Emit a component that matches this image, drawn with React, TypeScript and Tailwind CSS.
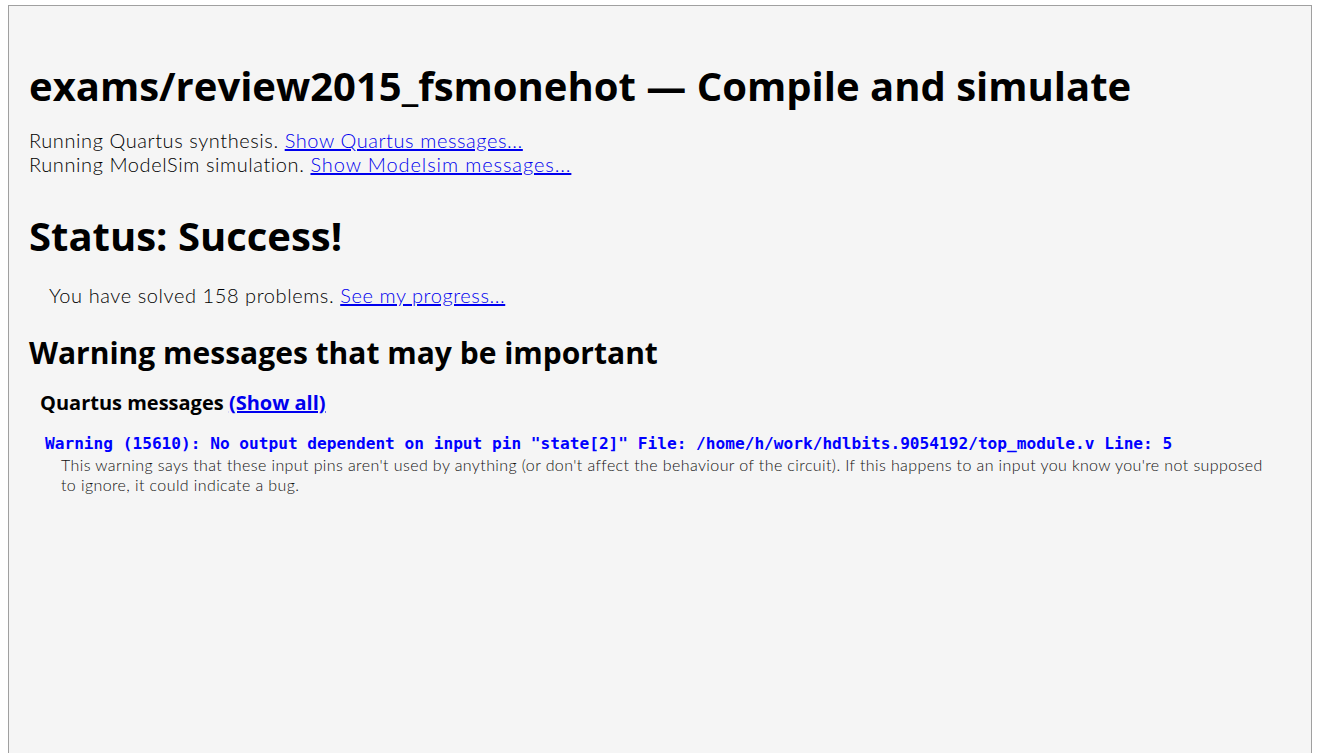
import React from "react";

export default function App() {
  return (
    <div className="h-[753px] overflow-hidden bg-white pt-[5px]">
      <div className="ml-[8px] w-[1304px] h-[760px] border border-[#a0a0a0] bg-[#f5f5f5] pl-[20px] pr-[20px] pt-[53px] text-black">
        <h1 className="font-['Open_Sans','Noto_Sans',sans-serif] text-[40px] leading-[54px] font-bold">
          exams/review2015_fsmonehot — Compile and simulate
        </h1>
        <div className="mt-[15px] font-['Lato','Open_Sans',sans-serif] text-[20px] leading-[24px] tracking-[0.58px] font-light">
          <div>
            Running Quartus synthesis.{" "}
            <a href="#" className="text-[#0000ee] underline">Show Quartus messages...</a>
          </div>
          <div>
            Running ModelSim simulation.{" "}
            <a href="#" className="text-[#0000ee] underline tracking-[0.9px]">Show Modelsim messages...</a>
          </div>
        </div>
        <h1 className="mt-[33px] font-['Open_Sans','Noto_Sans',sans-serif] text-[40px] leading-[54px] font-bold">
          Status: Success!
        </h1>
        <div className="mt-[20px] pl-[20px] font-['Lato','Open_Sans',sans-serif] text-[20px] leading-[24px] tracking-[0.58px] font-light">
          You have solved 158 problems.{" "}
          <a href="#" className="text-[#0000ee] underline">See my progress...</a>
        </div>
        <h2 className="mt-[25px] font-['Open_Sans','Noto_Sans',sans-serif] text-[30px] leading-[41px] font-bold">
          Warning messages that may be important
        </h2>
        <h3 className="mt-[16px] pl-[11px] font-['Open_Sans','Noto_Sans',sans-serif] text-[20px] leading-[27px] font-bold">
          Quartus messages{" "}
          <a href="#" className="text-[#0000ee] underline">(Show all)</a>
        </h3>
        <div className="mt-[18px] pl-[16px] font-['DejaVu_Sans_Mono','Liberation_Mono',monospace] text-[16.15px] leading-[20px] font-bold text-[#0000ff] whitespace-pre">
          Warning (15610): No output dependent on input pin "state[2]" File: /home/h/work/hdlbits.9054192/top_module.v Line: 5
        </div>
        <div className="mt-[1px] pl-[32px] font-['Lato','Open_Sans',sans-serif] text-[16px] leading-[20px] tracking-[0.4px] text-[#111] font-light">
          This warning says that these input pins aren't used by anything (or don't affect the behaviour of the circuit). If this happens to an input you know you're not supposed
          <br />
          to ignore, it could indicate a bug.
        </div>
      </div>
    </div>
  );
}
